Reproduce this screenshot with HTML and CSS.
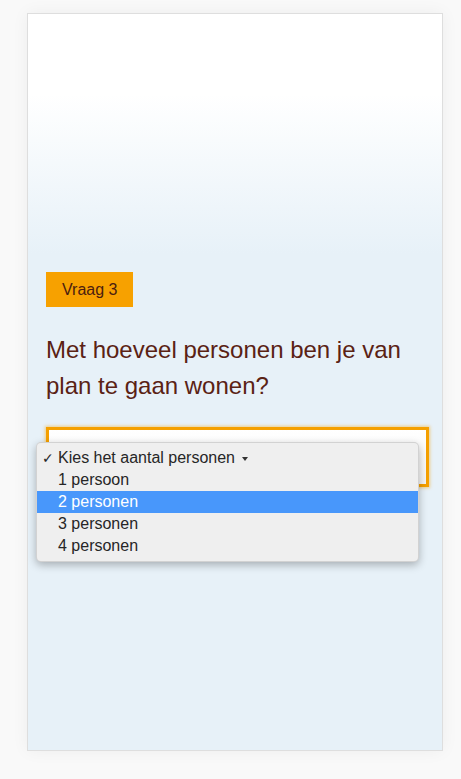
FILE: index.html
```html
<!DOCTYPE html>
<html lang="nl">
<head>
<meta charset="utf-8">
<title>Vraag 3</title>
<link rel="stylesheet" href="styles.css">
</head>
<body>
<main class="card">
  <span class="badge">Vraag 3</span>
  <h1 class="question">Met hoeveel personen ben je van plan te gaan wonen?</h1>
  <div class="select">
    <ul class="menu">
      <li class="menu-item menu-item--current"><span class="check">✓</span>Kies het aantal personen<span class="caret"></span></li>
      <li class="menu-item">1 persoon</li>
      <li class="menu-item menu-item--active">2 personen</li>
      <li class="menu-item">3 personen</li>
      <li class="menu-item">4 personen</li>
    </ul>
  </div>
</main>
</body>
</html>
```
FILE: styles.css
```css
html, body {
  margin: 0;
  padding: 0;
}
body {
  background: #f9f9f9;
  font-family: "Liberation Sans", Arial, sans-serif;
  padding: 13px 18px 28px 27px;
}
.card {
  box-sizing: border-box;
  width: 416px;
  height: 738px;
  border: 1px solid #dedede;
  background: linear-gradient(#ffffff 0, #ffffff 80px, #e7f1f8 240px, #e7f1f8 100%);
  box-shadow: 0 0 16px rgba(0, 0, 0, 0.05);
  padding: 258px 13px 0 18px;
}
.badge {
  display: inline-block;
  background: #f7a100;
  color: #4b1d10;
  font-size: 16px;
  line-height: 19px;
  padding: 8px 16px;
}
.question {
  margin: 25px 0 0;
  font-size: 24px;
  line-height: 36px;
  font-weight: normal;
  color: #5a2214;
}
.select {
  position: relative;
  box-sizing: border-box;
  width: 383px;
  height: 60px;
  margin-top: 23px;
  border: 3px solid #f5a000;
  background: linear-gradient(#ffffff, #f4f4f4);
  box-shadow: 0 0 3px 1px rgba(245, 160, 0, 0.45);
}
.menu {
  position: absolute;
  left: -13px;
  top: 12px;
  width: 383px;
  box-sizing: border-box;
  margin: 0;
  padding: 4px 0 4px;
  list-style: none;
  background: #efefef;
  border: 1px solid rgba(0, 0, 0, 0.12);
  border-radius: 5px;
  box-shadow: 0 3px 9px rgba(0, 0, 0, 0.28);
}
.menu-item {
  position: relative;
  height: 22px;
  line-height: 22px;
  padding-left: 21px;
  font-size: 16px;
  color: #262626;
}
.menu-item--active {
  background: #4897fb;
  color: #ffffff;
}
.check {
  position: absolute;
  left: 5px;
  top: 0;
  font-size: 14px;
  font-family: "DejaVu Sans", sans-serif;
}
.caret {
  display: inline-block;
  margin-left: 7px;
  vertical-align: middle;
  width: 0;
  height: 0;
  border-left: 3px solid transparent;
  border-right: 3px solid transparent;
  border-top: 4px solid #333333;
}
```
